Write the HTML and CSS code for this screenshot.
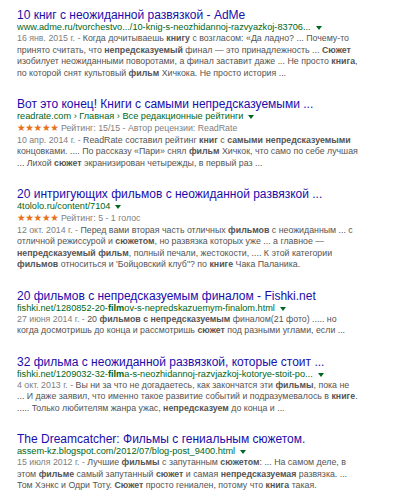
FILE: index.html
```html
<!DOCTYPE html>
<html lang="ru">
<head>
<meta charset="UTF-8">
<meta name="viewport" content="width=device-width, initial-scale=1.0">
<title>Поиск</title>
<link rel="stylesheet" href="styles.css">
</head>
<body>
<div class="results">

<div class="g">
<h3 class="r"><a href="#">10 книг с неожиданной развязкой - AdMe</a></h3>
<div class="url"><cite>www.adme.ru/tvorchestvo.../10-knig-s-neozhidannoj-razvyazkoj-83706...</cite><span class="arrow"></span></div>
<div class="st">
<span class="f">16 янв. 2015 г. - </span>Когда дочитываешь <b>книгу</b> с возгласом: «Да ладно? ... Почему-то<br>
принято считать, что <b>непредсказуемый</b> финал — это принадлежность ... <b>Сюжет</b><br>
изобилует неожиданными поворотами, а финал заставит даже ... Не просто <b>книга</b>,<br>
по которой снят культовый <b>фильм</b> Хичкока. Не просто история ...
</div>
</div>

<div class="g">
<h3 class="r"><a href="#">Вот это конец! Книги с самыми непредсказуемыми ...</a></h3>
<div class="url"><cite>readrate.com › Главная › Все редакционные рейтинги</cite><span class="arrow"></span></div>
<div class="rating"><span class="stars">★★★★★</span> Рейтинг: 15/15 - Автор рецензии: ReadRate</div>
<div class="st">
<span class="f">10 апр. 2014 г. - </span>ReadRate составил рейтинг <b>книг</b> с <b>самыми непредсказуемыми</b><br>
концовками. .... По рассказу «Пари» снял <b>фильм</b> Хичкок, что само по себе лучшая<br>
... Лихой <b>сюжет</b> экранизирован четырежды, в первый раз ...
</div>
</div>

<div class="g">
<h3 class="r"><a href="#">20 интригующих фильмов с неожиданной развязкой ...</a></h3>
<div class="url"><cite>4tololo.ru/content/7104</cite><span class="arrow"></span></div>
<div class="rating"><span class="stars">★★★★★</span> Рейтинг: 5 - 1 голос</div>
<div class="st">
<span class="f">12 окт. 2014 г. - </span>Перед вами вторая часть отличных <b>фильмов</b> с неожиданным ... с<br>
отличной режиссурой и <b>сюжетом</b>, но развязка которых уже ... а главное —<br>
<b>непредсказуемый фильм</b>, полный печали, жестокости, .... К этой категории<br>
<b>фильмов</b> относиться и 'Бойцовский клуб"? по <b>книге</b> Чака Паланика.
</div>
</div>

<div class="g">
<h3 class="r"><a href="#">20 фильмов с непредсказуемым финалом - Fishki.net</a></h3>
<div class="url"><cite>fishki.net/1280852-20-<b>film</b>ov-s-nepredskazuemym-finalom.html</cite><span class="arrow"></span></div>
<div class="st">
<span class="f">27 июня 2014 г. - </span>20 <b>фильмов с непредсказуемым</b> финалом(21 фото) ..... но<br>
когда досмотришь до конца и рассмотришь <b>сюжет</b> под разными углами, если ...
</div>
</div>

<div class="g">
<h3 class="r"><a href="#">32 фильма с неожиданной развязкой, которые стоит ...</a></h3>
<div class="url"><cite>fishki.net/1209032-32-<b>film</b>a-s-neozhidannoj-razvjazkoj-kotorye-stoit-po...</cite><span class="arrow"></span></div>
<div class="st">
<span class="f">4 окт. 2013 г. - </span>Вы ни за что не догадаетесь, как закончатся эти <b>фильмы</b>, пока не<br>
... И даже заявил, что именно такое развитие событий и подразумевалось в <b>книге</b>.<br>
..... Только любителям жанра ужас, <b>непредсказуем</b> до конца и ...
</div>
</div>

<div class="g">
<h3 class="r"><a href="#">The Dreamcatcher: Фильмы с гениальным сюжетом.</a></h3>
<div class="url"><cite>assem-kz.blogspot.com/2012/07/blog-post_9400.html</cite><span class="arrow"></span></div>
<div class="st">
<span class="f">15 июля 2012 г. - </span>Лучшие <b>фильмы</b> с запутанным <b>сюжетом</b>: ... На самом деле, в<br>
этом <b>фильме</b> самый запутанный <b>сюжет</b> и самая <b>непредсказуемая</b> развязка. ...<br>
Том Хэнкс и Одри Тоту. <b>Сюжет</b> просто гениален, потому что <b>книга</b> такая.
</div>
</div>

</div>
</body>
</html>
```

FILE: styles.css
```css
body {
font-family: "Liberation Sans", Arial, sans-serif;
margin: 8px 0 0 17px;
background-color: #fff;
}
.results {
width: 370px;
}
.g {
margin-bottom: 18px;
}
.r {
margin: 0;
font-size: 12px;
font-weight: normal;
line-height: 14px;
white-space: nowrap;
}
.r a {
color: #1a0dab;
text-decoration: none;
}
.url {
display: flex;
align-items: center;
height: 11px;
font-size: 9.2px;
line-height: 11px;
white-space: nowrap;
}
.url cite {
color: #006621;
font-style: normal;
}
.url cite b {
font-weight: bold;
}
.arrow {
display: inline-block;
margin-left: 5px;
margin-top: 1px;
border-top: 4px solid #006621;
border-left: 3px solid transparent;
border-right: 3px solid transparent;
}
.rating {
font-size: 8.8px;
line-height: 11.5px;
color: #808080;
white-space: nowrap;
}
.stars {
font-family: "DejaVu Sans", sans-serif;
font-size: 9.6px;
color: #e7711b;
letter-spacing: -0.3px;
}
.st {
font-size: 8.8px;
line-height: 11.5px;
color: #545454;
white-space: nowrap;
}
.st b {
color: #555;
}
.f {
color: #808080;
}
```
